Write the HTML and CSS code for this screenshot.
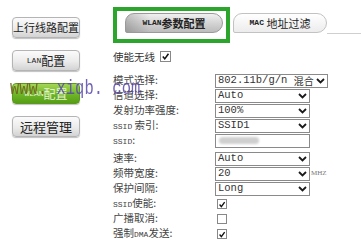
FILE: index.html
```html
<!DOCTYPE html>
<html lang="zh-CN">
<head>
    <meta charset="UTF-8">
    <title>WLAN参数配置</title>
    <link rel="stylesheet" href="styles.css">
</head>
<body>
    <div class="page">
        <aside class="side">
            <div class="btn btn-small">上行线路配置</div>
            <div class="btn"><span class="lat">LAN</span>配置</div>
            <div class="btn btn-on"><span class="lat">WLAN</span>配置</div>
            <div class="btn btn-big">远程管理</div>
        </aside>

        <main class="main">
            <div class="tabs">
                <div class="tab-mark">
                    <div class="tab tab-on"><span class="lat">WLAN</span>参数配置</div>
                </div>
                <div class="tab"><span class="lat">MAC</span>&nbsp;地址过滤</div>
                <div class="tab-line"></div>
            </div>

            <div class="enable">
                <span class="enable-label">使能无线</span>
                <span class="check on"><svg viewBox="0 0 10 10"><path d="M2 5l2.2 2.6L8.3 2"/></svg></span>
            </div>

            <div class="form">
                <div class="row">
                    <span class="label">模式选择:</span>
                    <div class="select wide"><span class="mono">802.11b/g/n&nbsp;</span><span class="opt-cn">混合</span><svg class="arrow" viewBox="0 0 9 6"><path d="M1 1l3.5 3.5L8 1"/></svg></div>
                </div>
                <div class="row">
                    <span class="label">信道选择:</span>
                    <div class="select"><span class="mono">Auto</span><svg class="arrow" viewBox="0 0 9 6"><path d="M1 1l3.5 3.5L8 1"/></svg></div>
                </div>
                <div class="row">
                    <span class="label">发射功率强度:</span>
                    <div class="select"><span class="mono">100%</span><svg class="arrow" viewBox="0 0 9 6"><path d="M1 1l3.5 3.5L8 1"/></svg></div>
                </div>
                <div class="row">
                    <span class="label"><span class="lat">SSID</span> 索引:</span>
                    <div class="select"><span class="mono">SSID1</span><svg class="arrow" viewBox="0 0 9 6"><path d="M1 1l3.5 3.5L8 1"/></svg></div>
                </div>
                <div class="row">
                    <span class="label"><span class="lat">SSID</span>:</span>
                    <div class="select text-input"><span class="blur"></span></div>
                </div>
                <div class="row row-gap">
                    <span class="label">速率:</span>
                    <div class="select"><span class="mono">Auto</span><svg class="arrow" viewBox="0 0 9 6"><path d="M1 1l3.5 3.5L8 1"/></svg></div>
                </div>
                <div class="row">
                    <span class="label">频带宽度:</span>
                    <div class="select"><span class="mono">20</span><svg class="arrow" viewBox="0 0 9 6"><path d="M1 1l3.5 3.5L8 1"/></svg></div>
                    <span class="unit">MHZ</span>
                </div>
                <div class="row">
                    <span class="label">保护间隔:</span>
                    <div class="select"><span class="mono">Long</span><svg class="arrow" viewBox="0 0 9 6"><path d="M1 1l3.5 3.5L8 1"/></svg></div>
                </div>
                <div class="row">
                    <span class="label"><span class="lat">SSID</span>使能:</span>
                    <span class="check on form-check"><svg viewBox="0 0 10 10"><path d="M2 5l2.2 2.6L8.3 2"/></svg></span>
                </div>
                <div class="row">
                    <span class="label">广播取消:</span>
                    <span class="check form-check"></span>
                </div>
                <div class="row">
                    <span class="label">强制<span class="lat">DMA</span>发送:</span>
                    <span class="check on form-check"><svg viewBox="0 0 10 10"><path d="M2 5l2.2 2.6L8.3 2"/></svg></span>
                </div>
            </div>
        </main>

        <!-- site watermark printed over the shot -->
        <div class="watermark"><span class="wm-www">www.</span> xiqb. com</div>
    </div>
</body>
</html>
```

FILE: styles.css
```css
html {
    font-family: "Noto Sans CJK SC", sans-serif;
}

body {
    margin: 0;
    background: #fff;
    color: #333;
}

.page {
    position: relative;
    display: flex;
    width: 361px;
    height: 242px;
    overflow: hidden;
}

.lat {
    font-family: "Liberation Mono", monospace;
    font-size: 8px;
}

.mono {
    font-family: "Liberation Mono", monospace;
}

/* left menu */

.side {
    box-sizing: border-box;
    width: 113px;
    padding: 17px 0 0 12px;
    display: flex;
    flex-direction: column;
    gap: 12px;
}

.btn {
    box-sizing: border-box;
    width: 68px;
    height: 21px;
    border: 1px solid #b4b4b4;
    border-radius: 4px;
    background: linear-gradient(#fbfbfb, #ebebeb 55%, #d3d3d3);
    box-shadow: 0 1px 1px rgba(0, 0, 0, 0.25);
    display: flex;
    align-items: center;
    justify-content: center;
    font-size: 12px;
    line-height: 1;
    color: #222;
}

.btn-small {
    font-size: 11px;
}

.btn-big {
    font-size: 13px;
}

.btn-on {
    border-color: #5c9a1e;
    background: linear-gradient(#a4d655, #72b82a 50%, #559e15);
    color: #e6f4d2;
}

/* tabs */

.main {
    flex: 1;
}

.tabs {
    display: flex;
    align-items: flex-start;
    margin-top: 7px;
}

.tab-mark {
    border: 4px solid #2ca52c;
    padding: 2px 3px 6px 8px;
}

.tab {
    box-sizing: border-box;
    width: 94px;
    height: 20px;
    margin: 6px 0 0 3px;
    border: 1px solid #c2c2c2;
    border-radius: 9px 10px 10px 2px;
    background: linear-gradient(#ffffff, #ececec);
    display: flex;
    align-items: center;
    justify-content: center;
    font-size: 11px;
    line-height: 1;
    color: #222;
}

.tab-on {
    width: 98px;
    margin: 0;
    border-color: #9a9a9a;
    background: linear-gradient(90deg, rgba(0, 0, 0, 0.18), rgba(0, 0, 0, 0) 25%),
        linear-gradient(#f0f0f0, #d2d2d2 55%, #bcbcbc);
    font-weight: 700;
}

.tab .lat {
    font-weight: 700;
}

.tab-line {
    flex: 1;
    height: 1px;
    margin-top: 26px;
    background: #cfcfcf;
}

/* form */

.enable {
    display: flex;
    align-items: center;
    height: 11px;
    margin-top: 8px;
    font-size: 10.5px;
}

.enable-label {
    width: 47px;
}

.check {
    box-sizing: border-box;
    width: 11px;
    height: 11px;
    border: 1px solid #888;
    background: #fff;
    display: flex;
}

.check svg {
    width: 9px;
    height: 9px;
}

.check path {
    fill: none;
    stroke: #111;
    stroke-width: 1.7;
}

.form {
    margin-top: 11px;
}

.row {
    display: flex;
    align-items: center;
    height: 15px;
    font-size: 10.5px;
    line-height: 1;
}

.row-gap {
    margin-top: 3px;
}

.label {
    width: 102px;
    flex-shrink: 0;
    color: #444;
    white-space: nowrap;
}

.select {
    box-sizing: border-box;
    width: 95px;
    height: 14px;
    border: 1px solid #8a8a8a;
    background: #fff;
    display: flex;
    align-items: center;
    padding: 0 2px;
    font-size: 10px;
    color: #333;
    white-space: nowrap;
}

.select .mono {
    font-size: 10.5px;
}

.opt-cn {
    font-size: 10px;
}

.select.wide {
    width: 113px;
}

.arrow {
    width: 9px;
    height: 6px;
    flex-shrink: 0;
    margin-left: auto;
}

.arrow path {
    fill: none;
    stroke: #1a1a1a;
    stroke-width: 1.8;
}

.text-input {
    padding-left: 3px;
}

.blur {
    width: 40px;
    height: 7px;
    border-radius: 4px;
    background: #cfcfcf;
    filter: blur(1.2px);
}

.unit {
    font-family: "Liberation Serif", serif;
    font-size: 7px;
    color: #777;
    margin-left: 1px;
}

.form-check {
    width: 10px;
    height: 10px;
    margin-left: 2px;
}

/* watermark over the page */

.watermark {
    position: absolute;
    left: 10px;
    top: 80px;
    font-family: "Liberation Mono", monospace;
    font-size: 15.5px;
    line-height: 1;
    white-space: pre;
    color: rgba(88, 72, 170, 0.85);
    transform: scaleY(1.3);
    transform-origin: left top;
}

.wm-www {
    color: rgba(110, 100, 30, 0.9);
}
```
